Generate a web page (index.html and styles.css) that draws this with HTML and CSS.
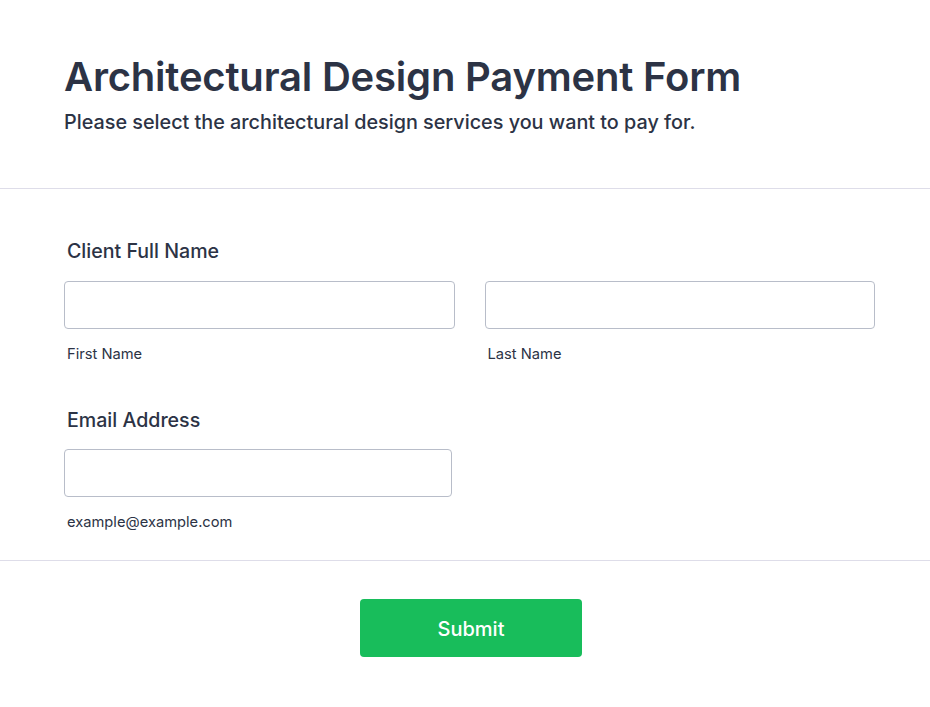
FILE: index.html
```html
<!DOCTYPE html>
<html lang="en">
<head>
<meta charset="utf-8">
<title>Architectural Design Payment Form</title>
<link rel="stylesheet" href="styles.css">
</head>
<body>
<header class="header">
  <h1 class="title">Architectural Design Payment Form</h1>
  <p class="subtitle">Please select the architectural design services you want to pay for.</p>
</header>
<section class="fields">
  <div class="field">
    <div class="label">Client Full Name</div>
    <div class="name-row">
      <div class="sub">
        <input class="input" type="text">
        <div class="sublabel">First Name</div>
      </div>
      <div class="sub">
        <input class="input" type="text">
        <div class="sublabel">Last Name</div>
      </div>
    </div>
  </div>
  <div class="field field-email">
    <div class="label label-email">Email Address</div>
    <div class="sub email">
      <input class="input" type="email">
      <div class="sublabel">example@example.com</div>
    </div>
  </div>
</section>
<div class="actions">
  <button class="submit" type="button">Submit</button>
</div>
</body>
</html>
```
FILE: styles.css
```css
* { box-sizing: border-box; }
html, body { margin: 0; padding: 0; background: #ffffff; }
body {
  font-family: Inter, "Noto Sans", "Liberation Sans", sans-serif;
  color: #2c3345;
}
.header {
  padding: 53px 64px 54px;
  border-bottom: 1px solid #dedde9;
}
.title {
  margin: 0;
  font-size: 40px;
  line-height: 48px;
  font-weight: 600;
  letter-spacing: -0.2px;
}
.subtitle {
  margin: 9px 0 0;
  font-size: 19.8px;
  line-height: 24px;
  font-weight: 500;
}
.fields {
  padding: 50px 55px 28px 64px;
  border-bottom: 1px solid #dedde9;
}
.field-email { margin-top: 44px; }
.label {
  padding-left: 3px;
  font-size: 19.6px;
  line-height: 24px;
  font-weight: 500;
  margin-bottom: 18px;
}
.label-email { margin-bottom: 17px; }
.name-row {
  display: grid;
  grid-template-columns: 1fr 1fr;
  column-gap: 30px;
}
.sub { display: flex; flex-direction: column; }
.email { width: 388px; }
.input {
  display: block;
  width: 100%;
  height: 48px;
  margin: 0;
  border: 1px solid #b8bdc9;
  border-radius: 4px;
  background: #fff;
  font: inherit;
}
.sublabel {
  margin-top: 15px;
  padding-left: 3px;
  font-size: 14.7px;
  line-height: 20px;
}
.actions {
  display: flex;
  justify-content: center;
  padding: 38px 0 0 12px;
}
.submit {
  width: 222px;
  height: 58px;
  border: 0;
  border-radius: 4px;
  background: #18bd5b;
  color: #fff;
  font-family: Inter, "Noto Sans", "Liberation Sans", sans-serif;
  font-size: 20px;
  font-weight: 500;
  padding-top: 2px;
}
```
